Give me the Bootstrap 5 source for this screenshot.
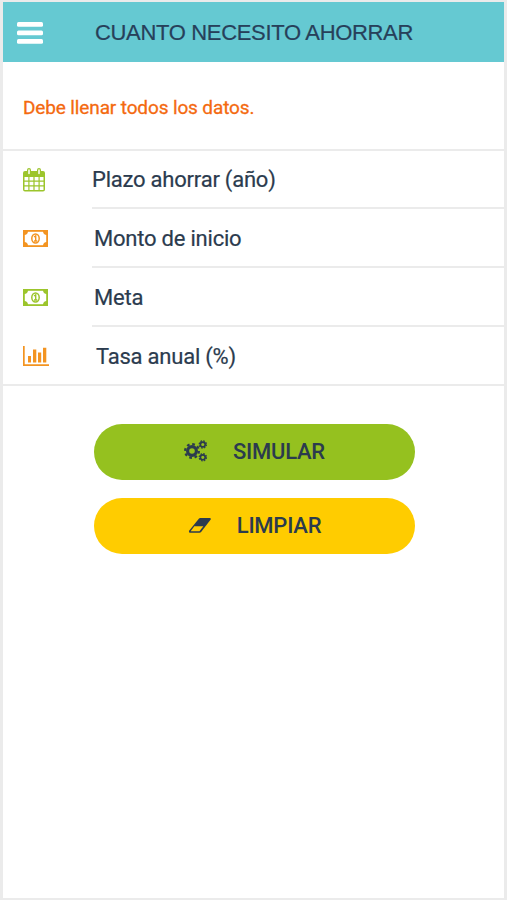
<!DOCTYPE html>
<html lang="es">
<head>
<meta charset="utf-8">
<meta name="viewport" content="width=device-width, initial-scale=1">
<title>Cuanto necesito ahorrar</title>
<link href="https://cdn.jsdelivr.net/npm/bootstrap@5.3.0/dist/css/bootstrap.min.css" rel="stylesheet">
<style>
body{font-family:Roboto,sans-serif;color:#2b3b4e;background:#fff}
.screen{height:900px;border:solid #ebebeb;border-width:2px 3px}
.topbar{height:60px;background:#65c9d2;padding:1px 0 0 14px}
.topbar h1{font:22px/30px "Liberation Sans",sans-serif;margin:0 0 0 52px;color:#27405a;letter-spacing:-.33px;-webkit-text-stroke:.2px}
.notice{height:87px;padding:6px 0 0 20px;font-size:19px;letter-spacing:-.13px;color:#f4690f;-webkit-text-stroke:.3px}
.fields{border-top:2px solid #ebebeb;border-bottom:2px solid #ebebeb}
.field-row{height:59px;padding-left:20px}
.field-row:first-child{height:58px}
.field-row:last-child{height:57px}
.field-icon{width:69px}
.field-label{font-size:22px;letter-spacing:-.22px;-webkit-text-stroke:.2px;border-bottom:2px solid #ebebeb}
.field-row:last-child .field-label{border-bottom:0}
.shift-a{padding:2px 0 0 2px}.shift-b{padding:2px 0 0 4px}
.actions{padding:38px 89px 0 91px;gap:18px}
.action{height:56px;color:#2b3b4e;font-size:22px;font-weight:500;letter-spacing:-.25px}
.action span{padding:0 0 2px 1px}
.action svg{margin-bottom:2px}
.go{background:#95c11f}.clear{background:#fc0}
svg{display:block;flex:none}
</style>
</head>
<body>
<main class="screen d-flex flex-column">
<header class="topbar d-flex align-items-center">
<svg width="26" height="22" viewBox="0 0 26 22" fill="#fff"><rect width="26" height="4.8" rx="1.5"/><rect y="8.5" width="26" height="4.8" rx="1.5"/><rect y="17" width="26" height="4.8" rx="1.5"/></svg>
<h1 class="text-nowrap">CUANTO NECESITO AHORRAR</h1>
</header>
<div class="notice d-flex align-items-center">Debe llenar todos los datos.</div>
<section class="fields">
<div class="field-row d-flex">
<div class="field-icon d-flex align-items-center"><svg width="22" height="24" viewBox="0 0 22 24"><path fill="#9cc52c" fill-rule="evenodd" d="M2 3H4V2a2 2 0 0 1 4 0V3H14V2a2 2 0 0 1 4 0V3H20a2 2 0 0 1 2 2V21.500a2 2 0 0 1-2 2H2a2 2 0 0 1-2-2V5A2 2 0 0 1 2 3ZM1.500 9V12.500H5.300V9ZM6.500 9V12.500H10.400V9ZM11.600 9V12.500H15.500V9ZM16.700 9V12.500H20.500V9ZM1.500 13.700V17.300H5.300V13.700ZM6.500 13.700V17.300H10.400V13.700ZM11.600 13.700V17.300H15.500V13.700ZM16.700 13.700V17.300H20.500V13.700ZM1.500 18.500V22H5.300V18.500ZM6.500 18.500V22H10.400V18.500ZM11.600 18.500V22H15.500V18.500ZM16.700 18.500V22H20.500V18.500Z"/><path d="M6 2V5.500M16 2V5.500" stroke="#fff" stroke-width="1.500" stroke-linecap="round"/></svg></div>
<div class="field-label flex-grow-1 d-flex align-items-center">Plazo ahorrar (año)</div>
</div>
<div class="field-row d-flex">
<div class="field-icon d-flex align-items-center"><svg width="25" height="17" viewBox="0 0 25 17" fill="none" stroke="#f39421"><rect x=".9" y=".9" width="23.200" height="15.200" stroke-width="1.800"/><path fill="#f39421" stroke="none" d="M1 1H5Q5 5 1 5ZM24 1H20Q20 5 24 5ZM1 16H5Q5 12 1 12ZM24 16H20Q20 12 24 12Z"/><ellipse cx="12.500" cy="8.500" rx="3.700" ry="4.500" stroke-width="1.500"/><path d="M11 7 12.700 5.800V11M11 11H14.300" stroke-width="1.400"/></svg></div>
<div class="field-label flex-grow-1 d-flex align-items-center shift-a">Monto de inicio</div>
</div>
<div class="field-row d-flex">
<div class="field-icon d-flex align-items-center"><svg width="25" height="17" viewBox="0 0 25 17" fill="none" stroke="#9cc52c"><rect x=".9" y=".9" width="23.200" height="15.200" stroke-width="1.800"/><path fill="#9cc52c" stroke="none" d="M1 1H5Q5 5 1 5ZM24 1H20Q20 5 24 5ZM1 16H5Q5 12 1 12ZM24 16H20Q20 12 24 12Z"/><ellipse cx="12.500" cy="8.500" rx="3.700" ry="4.500" stroke-width="1.500"/><path d="M11 7 12.700 5.800V11M11 11H14.300" stroke-width="1.400"/></svg></div>
<div class="field-label flex-grow-1 d-flex align-items-center shift-a">Meta</div>
</div>
<div class="field-row d-flex">
<div class="field-icon d-flex align-items-center"><svg width="26" height="20" viewBox="0 0 26 20" fill="#f39421"><path d="M0 0H1.700V18.300H26V20H0ZM5 10H8V16.500H5ZM10 3.500H13.300V16.500H10ZM15 6.500H18.200V16.500H15ZM20 1.800H23.300V16.500H20Z"/></svg></div>
<div class="field-label flex-grow-1 d-flex align-items-center shift-b">Tasa anual (%)</div>
</div>
</section>
<div class="actions d-flex flex-column">
<button type="button" class="action go btn border-0 rounded-pill p-0 d-flex align-items-center justify-content-center"><svg class="me-4" width="24" height="22" viewBox="0 0 24 22" fill="none" stroke="#2b3b4e"><circle cx="8" cy="11" r="4.400" stroke-width="3.200"/><circle cx="8" cy="11" r="6.900" stroke-width="2.200" stroke-dasharray="2.710 2.710"/><circle cx="18.800" cy="4.500" r="2.400" stroke-width="1.600"/><circle cx="18.800" cy="4.500" r="3.600" stroke-width="1.300" stroke-dasharray="1.620 1.207"/><circle cx="18.800" cy="17.300" r="2.400" stroke-width="1.600"/><circle cx="18.800" cy="17.300" r="3.600" stroke-width="1.300" stroke-dasharray="1.620 1.207"/></svg><span>SIMULAR</span></button>
<button type="button" class="action clear btn border-0 rounded-pill p-0 d-flex align-items-center justify-content-center"><svg class="me-4" width="24" height="17" viewBox="0 0 24 17"><path d="M1.300 13.500 11 1.500Q11.500 1 12.200 1H21.800Q23.500 1 22.700 2.500L13.300 14.800Q12.500 15.800 11.500 15.800H2Q.2 15.500 1.300 13.500Z" fill="#2b3b4e"/><path d="M6.300 9.300H15.300L11.500 14.200H2.700Z" fill="#fc0"/></svg><span>LIMPIAR</span></button>
</div>
</main>
<script src="https://cdn.jsdelivr.net/npm/bootstrap@5.3.0/dist/js/bootstrap.bundle.min.js"></script>
</body>
</html>
